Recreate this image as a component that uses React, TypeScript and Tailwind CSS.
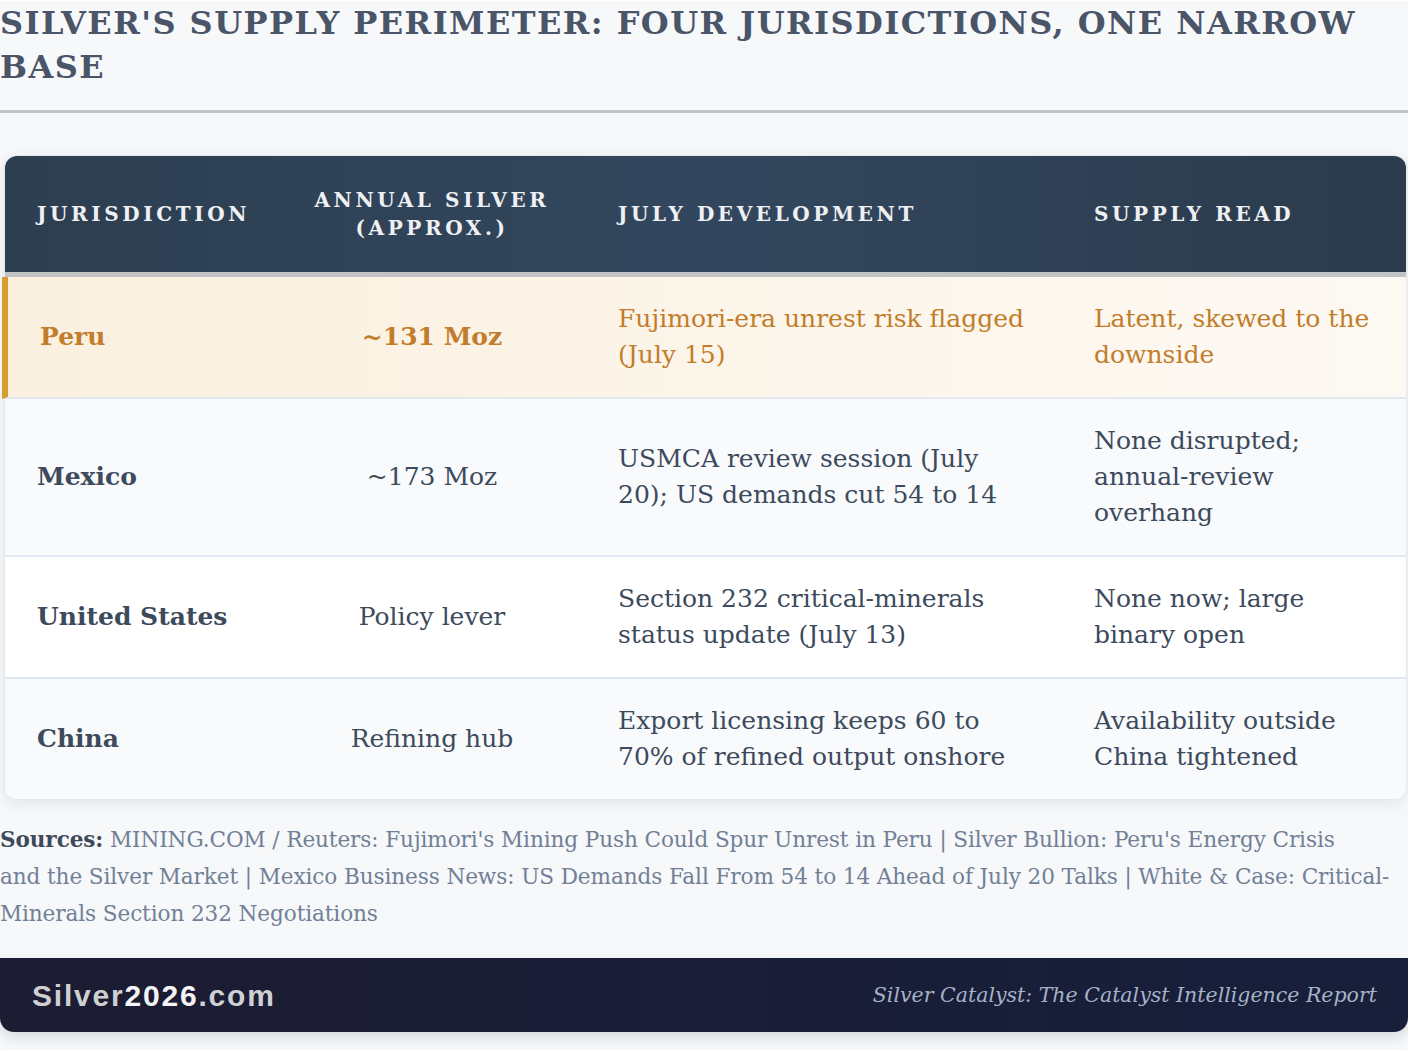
import React from 'react'

const serif = { fontFamily: '"DejaVu Serif", "Liberation Serif", serif' }
const sans = { fontFamily: '"Liberation Sans", Arial, sans-serif' }

interface Row {
  name: string
  amount: string
  development: string
  read: string
}

const rows: Row[] = [
  {
    name: 'Mexico',
    amount: '~173 Moz',
    development: 'USMCA review session (July 20); US demands cut 54 to 14',
    read: 'None disrupted; annual-review overhang',
  },
  {
    name: 'United States',
    amount: 'Policy lever',
    development: 'Section 232 critical-minerals status update (July 13)',
    read: 'None now; large binary open',
  },
  {
    name: 'China',
    amount: 'Refining hub',
    development: 'Export licensing keeps 60 to 70% of refined output onshore',
    read: 'Availability outside China tightened',
  },
]

const headers = ['Jurisdiction', 'Annual Silver (Approx.)', 'July Development', 'Supply Read']

export default function App() {
  return (
    <div className="min-h-screen w-[1408px] bg-[#f7f8fa] pb-4" style={serif}>
      {/* Title */}
      <h1 className="mt-[1px] text-[32px] leading-[44px] font-bold uppercase tracking-[0.045em] text-[#4a5568]">
        Silver&apos;s Supply Perimeter: Four Jurisdictions, One Narrow Base
      </h1>
      <div className="mt-[21px] h-[3px] bg-[#c2c3c5]" />

      {/* Table card */}
      <div className="mt-[42px] ml-[4px] w-[1403px] rounded-xl border border-[#e2e8f0] bg-white shadow-[0_4px_16px_rgba(0,0,0,0.08)]">
        <div className="grid h-[116px] grid-cols-[273px_308px_476px_344px] items-center rounded-t-xl bg-gradient-to-r from-[#2d3e50] via-[#32475e] to-[#2c3b4d] text-[20px] leading-[28px] font-bold uppercase tracking-[0.18em] text-[#eef0f3]">
          {headers.map((h, i) => (
            <div key={h} className={i === 1 ? 'px-6 text-center' : 'px-8'}>
              {h === 'Annual Silver (Approx.)' ? (
                <>
                  Annual Silver
                  <br />
                  (Approx.)
                </>
              ) : (
                h
              )}
            </div>
          ))}
        </div>
        <div className="h-[5px] bg-[#c2c3c5]" />

        {/* Highlighted row */}
        <div className="-ml-[3px] grid grid-cols-[270px_308px_476px_344px] items-center border-b-2 border-l-[6px] border-b-[#e2e8f0] border-l-[#d69e2e] bg-gradient-to-r from-[#fbf0df] to-[#fdf9f3] py-6 text-[25px] leading-[36px] text-[#c27d2a]">
          <div className="px-8 font-bold">Peru</div>
          <div className="px-8 text-center font-bold">~131 Moz</div>
          <div className="px-8">Fujimori-era unrest risk flagged (July 15)</div>
          <div className="px-8">Latent, skewed to the downside</div>
        </div>

        {rows.map((r, i) => (
          <div
            key={r.name}
            className={
              'grid grid-cols-[273px_308px_476px_344px] items-center py-6 text-[25px] leading-[36px] text-[#3d4a5c] ' +
              (i === 1 ? 'bg-white ' : 'bg-[#f8fafc] ') +
              (i < rows.length - 1 ? 'border-b-2 border-[#e2e8f0]' : 'rounded-b-xl')
            }
          >
            <div className="px-8 font-bold">{r.name}</div>
            <div className="px-8 text-center">{r.amount}</div>
            <div className="px-8">{r.development}</div>
            <div className="px-8">{r.read}</div>
          </div>
        ))}
      </div>

      {/* Sources */}
      <p className="mt-[21px] text-[21.6px] leading-[37px] tracking-[-0.005em] text-[#718096]">
        <span className="font-bold text-[#3d4a5c]">Sources:</span> MINING.COM / Reuters: Fujimori&apos;s Mining Push Could
        Spur Unrest in Peru | Silver Bullion: Peru&apos;s Energy Crisis
        <br />
        and the Silver Market | Mexico Business News: US Demands Fall From 54 to 14 Ahead of July 20 Talks | White &amp;
        Case: Critical-Minerals Section 232 Negotiations
      </p>

      {/* Footer */}
      <div className="mt-[26px] flex h-[74px] items-center justify-between rounded-b-[14px] bg-gradient-to-r from-[#1c1c32] to-[#171f3b] pr-[31px] pl-8 shadow-[0_6px_14px_rgba(0,0,0,0.12)]">
        <div className="text-[30px] font-bold tracking-[0.06em] text-[#cfd0d4]" style={sans}>
          Silver<span className="text-[#f4f4f6]">2026</span>.com
        </div>
        <div className="text-[20.5px] italic text-[#a6b2c6]">Silver Catalyst: The Catalyst Intelligence Report</div>
      </div>
    </div>
  )
}
